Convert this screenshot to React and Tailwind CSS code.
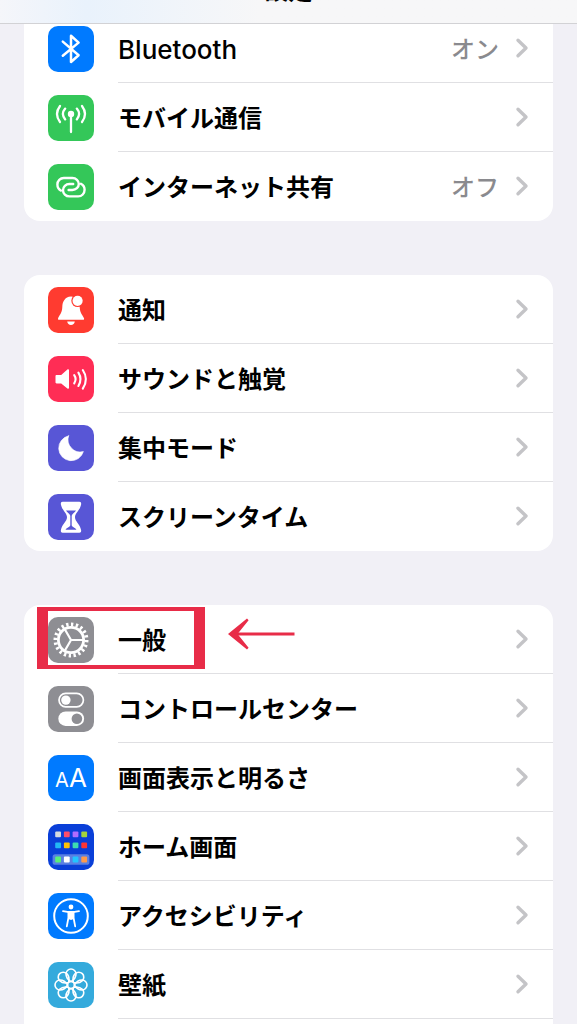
import React from 'react';
import clsx from 'clsx';

// Icon glyphs, all drawn on a 46x46 grid
const Glyph = ({ children }) => (
  <svg viewBox="0 0 46 46" className="w-full h-full" fill="none" stroke="none" strokeLinecap="round" strokeLinejoin="round" aria-hidden="true">
    {children}
  </svg>
);

const BluetoothIcon = () => (
  <Glyph>
    <path d="M14.8 15.6 30.6 29.2 23 36V9.8l7.6 6.8-15.8 13.2" stroke="#fff" strokeWidth="2.5" />
  </Glyph>
);

const AntennaIcon = () => (
  <Glyph>
    <circle cx="23" cy="19" r="3.2" fill="#fff" />
    <path d="M23 20V37" stroke="#fff" strokeWidth="2.3" />
    <path d="M17.2 13.6Q12.6 19 17.2 24.4M28.8 13.6Q33.4 19 28.8 24.4M12 11Q6 19 12 27M34 11Q40 19 34 27" stroke="#fff" strokeWidth="2.3" />
  </Glyph>
);

const HotspotIcon = () => (
  <Glyph>
    <path
      d="M13 26.6C10.4 25.4 9.4 23 9.4 20.6c0-3.8 2.8-6.6 6.4-6.6h8.6c3.6 0 6.4 2.7 6.4 6s-2.8 6-6.4 6h-3.8M33 19.8c2.6 1.2 3.6 3.6 3.6 6 0 3.8-2.8 6.6-6.4 6.6h-8.8c-3.6 0-6.4-2.8-6.4-6.2s2.8-6.2 6.4-6.2h3.8"
      stroke="#fff"
      strokeWidth="2.4"
    />
  </Glyph>
);

const BellIcon = () => (
  <Glyph>
    <path d="M23 9.5C16.8 10 14.4 14.5 14.3 20 14.2 26 11 28.6 10.1 31.3c-.3 1 .1 1.5 1 1.5H35c.9 0 1.3-.5 1-1.5C35 28.6 31.8 26 31.7 20 31.6 14.5 29.2 10 23 9.5Z" fill="#fff" />
    <path d="M19.2 34.5h7.6c-.3 2.2-1.8 3.4-3.8 3.4s-3.5-1.2-3.8-3.4Z" fill="#fff" />
    <circle cx="29.6" cy="13.8" r="6.3" fill="#ff3b30" />
    <circle cx="29.6" cy="13.8" r="5.1" fill="#fff" />
  </Glyph>
);

const SpeakerIcon = () => (
  <Glyph>
    <path d="M8.6 19h4.6l6.2-5.4c.8-.6 1.6-.3 1.6.6v17.6c0 .9-.8 1.2-1.6.6L13.2 27.4H8.6c-.7 0-1.1-.5-1.1-1.2v-6c0-.7.4-1.2 1.1-1.2Z" fill="#fff" />
    <path d="M26.2 19.2Q29 23.2 26.2 27.4M30.4 16.6Q34.6 23.2 30.4 30M34.8 14Q41 23.2 34.8 32.6" stroke="#fff" strokeWidth="2.1" />
  </Glyph>
);

const MoonIcon = () => (
  <Glyph>
    <path d="M20.6 10.8A12.6 12.6 0 1 0 35.4 26.6 12.4 12.4 0 0 1 20.6 10.8Z" fill="#fff" stroke="#fff" strokeWidth="0.6" />
  </Glyph>
);

const HourglassIcon = () => (
  <Glyph>
    <path d="M14.6 7.8h16.8c1.4 0 2 1 1.7 2.6C32 16.4 27 19 27 23.2s5 6.8 6.1 12.8c.3 1.8-.3 2.8-1.7 2.8H14.6c-1.4 0-2-1-1.7-2.8C14 30 19 27.4 19 23.2S14 16.4 12.9 10.4c-.3-1.6.3-2.6 1.7-2.6Z" fill="#fff" />
    <path d="M18 16.4h10c-.8 2-3.8 2.8-4.3 5.4v9.4c.4 2.2 4 2.4 4.7 4.6H17.6c.7-2.2 4.3-2.4 4.7-4.6v-9.4c-.5-2.6-3.5-3.4-4.3-5.4Z" fill="#5856d6" />
  </Glyph>
);

const GearIcon = () => (
  <Glyph>
    <circle cx="23" cy="23" r="15.6" stroke="#fff" strokeWidth="3.8" strokeLinecap="butt" pathLength="200" strokeDasharray="4.8 5.2" />
    <circle cx="23" cy="23" r="12.6" stroke="#fff" strokeWidth="2.8" />
    <path d="M23 23H36M23 23 16.5 11.7M23 23 16.5 34.3" stroke="#fff" strokeWidth="2.2" />
  </Glyph>
);

const TogglesIcon = () => (
  <Glyph>
    <rect x="11" y="7.4" width="24.4" height="13.4" rx="6.7" stroke="#fff" strokeWidth="1.7" />
    <circle cx="17.9" cy="14.1" r="4.7" fill="#fff" />
    <rect x="10.3" y="25.4" width="25.8" height="14.6" rx="7.3" fill="#fff" />
    <circle cx="28.9" cy="32.7" r="5.3" fill="#8e8e93" />
  </Glyph>
);

const TextSizeIcon = () => (
  <span className="flex items-baseline justify-center font-['Inter',sans-serif] text-white leading-none" aria-hidden="true">
    <span className="text-[20px]">A</span>
    <span className="text-[26px]">A</span>
  </span>
);

const homeApps = [
  ['#d5dbe0', '#ff4d6a', '#b06cff', '#a4d43c'],
  ['#22b8f5', '#ffc107', '#3ddbb0', '#ff3434'],
  ['#5af078', '#ffffff', '#22c4ff', '#ff9a4a'],
];
const homeRows = [7.4, 18.4, 32.6];

const HomeScreenIcon = () => (
  <Glyph>
    <rect x="4.6" y="30.2" width="36.8" height="10.6" rx="2.6" fill="#5a80e2" />
    {homeApps.map((row, r) =>
      row.map((color, c) => (
        <rect key={color} x={7.2 + c * 8.7} y={homeRows[r]} width="5.8" height="5.8" rx="1" fill={color} />
      ))
    )}
  </Glyph>
);

const AccessibilityIcon = () => (
  <Glyph>
    <circle cx="23" cy="23" r="16.8" stroke="#fff" strokeWidth="2" />
    <circle cx="23" cy="14" r="2.4" fill="#fff" />
    <path d="M15 18.2 21 19.2H25L31 18.2" stroke="#fff" strokeWidth="1.8" />
    <path d="M20.4 18.8h5.2v6.2l1.6 8.4M20.4 18.8v6.2l-1.6 8.4" stroke="#fff" strokeWidth="1.8" />
    <path d="M20.4 18.8h5.2V26L23 27l-2.6-1Z" fill="#fff" />
  </Glyph>
);

const FlowerIcon = () => (
  <Glyph>
    {[0, 45, 90, 135, 180, 225, 270, 315].map((angle) => (
      <path
        key={angle}
        d="M23 19.6C19.6 17.6 18 14.6 18 12a5 5 0 0 1 10 0C28 14.6 26.4 17.6 23 19.6Z"
        transform={`rotate(${angle} 23 23)`}
        stroke="#fff"
        strokeWidth="1.6"
      />
    ))}
    <circle cx="23" cy="23" r="3.4" stroke="#fff" strokeWidth="1.5" />
  </Glyph>
);

const Chevron = () => (
  <svg viewBox="0 0 14 22" className="w-[14px] h-[22px] shrink-0" fill="none" aria-hidden="true">
    <path d="M3 3.2 11 11 3 18.8" stroke="#c4c4c7" strokeWidth="3.4" strokeLinecap="round" strokeLinejoin="round" />
  </svg>
);

// Red frame and arrow drawn over the highlighted row
const Callout = () => (
  <>
    <span className="absolute left-[13px] top-0.5 w-[168px] h-[62px] border-x-[11px] border-y-4 border-[#e82c48] pointer-events-none" />
    <svg viewBox="0 0 68 32" className="absolute left-51 top-[13px] w-[68px] h-8 pointer-events-none" fill="none" aria-hidden="true">
      <path d="M66.5 16H4" stroke="#e82c48" strokeWidth="3.2" />
      <path d="M0 16 19 .5 20.6 2.2 9.5 16 20.6 29.8 19 31.5Z" fill="#e82c48" />
    </svg>
  </>
);

const groups = [
  [
    { label: 'Bluetooth', value: 'オン', icon: BluetoothIcon, tile: 'bg-[#007aff]', latin: true },
    { label: 'モバイル通信', icon: AntennaIcon, tile: 'bg-[#34c759]' },
    { label: 'インターネット共有', value: 'オフ', icon: HotspotIcon, tile: 'bg-[#34c759]' },
  ],
  [
    { label: '通知', icon: BellIcon, tile: 'bg-[#ff3b30]' },
    { label: 'サウンドと触覚', icon: SpeakerIcon, tile: 'bg-[#ff2d55]' },
    { label: '集中モード', icon: MoonIcon, tile: 'bg-[#5856d6]' },
    { label: 'スクリーンタイム', icon: HourglassIcon, tile: 'bg-[#5856d6]' },
  ],
  [
    { label: '一般', icon: GearIcon, tile: 'bg-[#8e8e93]', highlighted: true },
    { label: 'コントロールセンター', icon: TogglesIcon, tile: 'bg-[#8e8e93]' },
    { label: '画面表示と明るさ', icon: TextSizeIcon, tile: 'bg-[#007aff]' },
    { label: 'ホーム画面', icon: HomeScreenIcon, tile: 'bg-[#0a3fd8]' },
    { label: 'アクセシビリティ', icon: AccessibilityIcon, tile: 'bg-[#007aff]' },
    { label: '壁紙', icon: FlowerIcon, tile: 'bg-[#34aadc]' },
  ],
];

const SettingsRow = ({ item, divider }) => {
  const Icon = item.icon;
  return (
    <li className="relative">
      <button type="button" className="flex items-center w-full h-[69px] pl-6 text-left">
        <span className={clsx('flex items-center justify-center w-[46px] h-[46px] shrink-0 rounded-[10px] overflow-hidden', item.tile)}>
          <Icon />
        </span>
        <span className={clsx('flex flex-1 items-center self-stretch ml-6 pr-6 border-b', divider ? 'border-[#e0e0e3]' : 'border-transparent')}>
          <span className={clsx('flex-1 pt-1 leading-8 text-black', item.latin ? 'text-[26px] font-medium' : 'text-[24px] font-semibold')}>
            {item.label}
          </span>
          {item.value && <span className="mr-4 pt-1 text-[24px] leading-8 font-medium text-[#8a8a8e]">{item.value}</span>}
          <Chevron />
        </span>
      </button>
      {item.highlighted && <Callout />}
    </li>
  );
};

const App = () => (
  <div className="flex flex-col min-h-screen bg-[#f1f0f6] font-['Inter','Noto_Sans_CJK_JP',sans-serif]">
    <header className="fixed inset-x-0 top-0 z-10 h-6 overflow-hidden border-b border-[#d2d2d5] bg-linear-to-r from-[#f5f6fa] via-[#e9f2fc] via-15% to-[#f7f7f8] to-45%">
      <h1 className="-mt-[21px] text-center text-[24px] leading-6 font-bold text-black">設定</h1>
    </header>

    <main className="flex flex-1 flex-col gap-[54px] px-6 pt-[14px]">
      {groups.map((items, g) => {
        const first = g === 0;
        const last = g === groups.length - 1;
        return (
          <ul
            key={items[0].label}
            className={clsx('bg-white', !first && 'rounded-t-2xl', last ? 'flex-1' : 'rounded-b-2xl')}
          >
            {items.map((item, i) => (
              <SettingsRow key={item.label} item={item} divider={last || i < items.length - 1} />
            ))}
          </ul>
        );
      })}
    </main>
  </div>
);

export default App;
